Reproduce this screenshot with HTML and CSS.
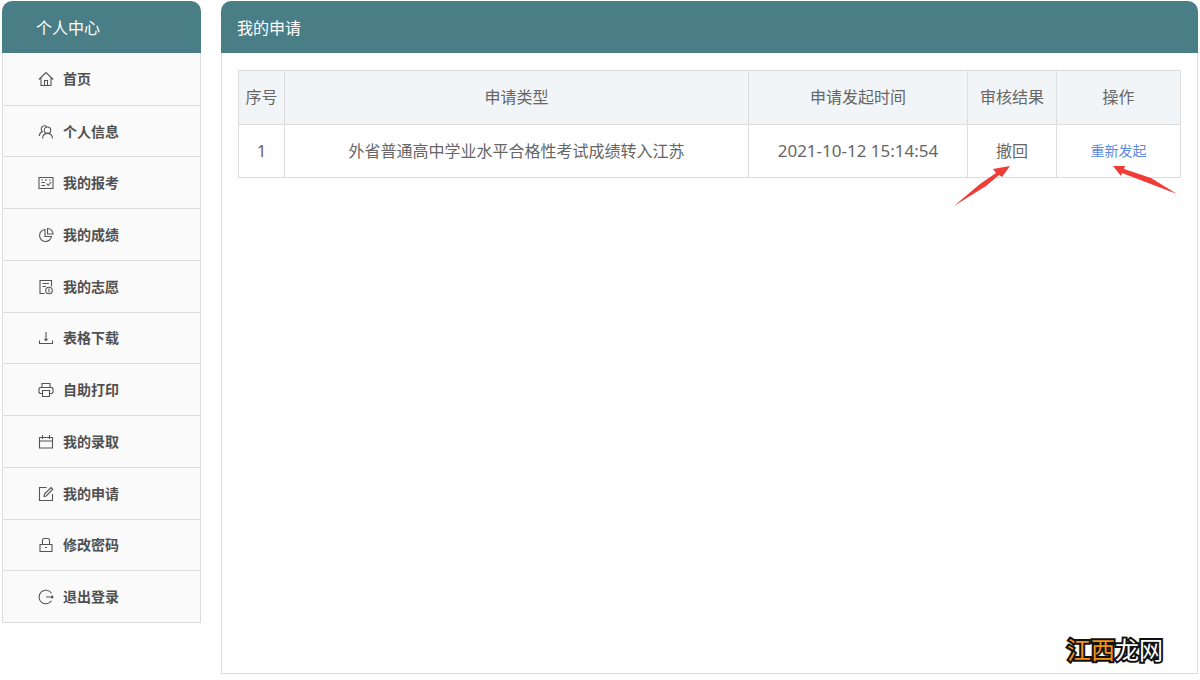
FILE: index.html
```html
<!DOCTYPE html>
<html lang="zh-CN">
<head>
<meta charset="utf-8">
<title>我的申请</title>
<link rel="stylesheet" href="styles.css">
</head>
<body>
<div class="layout">
  <nav class="sidebar" aria-label="个人中心">
    <h2 class="bar bar-side">个人中心</h2>
    <ul class="menu">
      <li><a href="#"><svg class="icon" viewBox="0 0 16 16"><path d="M.8 8.500 8 1.500l7.200 7M3 7v7.500h10V7M6.500 14.500V9.500h3v5"/></svg>首页</a></li>
      <li><a href="#"><svg class="icon" viewBox="0 0 16 16"><circle cx="9.500" cy="6.200" r="3.200"/><path d="M4.500 14.500c.2-3.200 2-5.100 5-5.100s4.800 1.900 5 5.100M4.500 7.700A3 3 0 1 1 8.600 2.500M1.200 12c.2-2.300 1.400-3.700 3.600-4.400"/></svg>个人信息</a></li>
      <li><a href="#"><svg class="icon" viewBox="0 0 16 16"><path d="M1 2.500h14v11H1zM3.500 5h1.500M7 5h2M11 5h1.500M3.500 7.500h3.500M3.500 10.500h3.500M8.500 8.500l1.700 2 3-3.500"/></svg>我的报考</a></li>
      <li><a href="#"><svg class="icon" viewBox="0 0 16 16"><path d="M7 2.500A6 6 0 1 0 13.500 9.500H7zM9.500 1.500v5.500h5.500A5.500 5.500 0 0 0 9.500 1.500z"/></svg>我的成绩</a></li>
      <li><a href="#"><svg class="icon" viewBox="0 0 16 16"><path d="M6.500 14.500H2v-13h11.500v6M4.500 4.500H11M4.500 7.500h3.500"/><circle cx="11" cy="11.500" r="3.300"/><path d="M11 9.500v4"/></svg>我的志愿</a></li>
      <li><a href="#"><svg class="icon" viewBox="0 0 16 16"><path d="M1.500 10.500v3h13v-3M8 2v8.500M6.500 9l1.500 1.500 1.500-1.500"/></svg>表格下载</a></li>
      <li><a href="#"><svg class="icon" viewBox="0 0 16 16"><path d="M4 5.500v-4h8v4M4 11.500H2l-1-1v-4l1-1h12l1 1v4l-1 1h-2M4.500 8.500h7v6h-7z"/></svg>自助打印</a></li>
      <li><a href="#"><svg class="icon" viewBox="0 0 16 16"><path d="M1.500 3.500h13v10.500h-13zM1.500 7h13M4.500 1v4M11.500 1v4"/></svg>我的录取</a></li>
      <li><a href="#"><svg class="icon" viewBox="0 0 16 16"><path d="M8.500 1.500H1.500v13h13V8M6 10.500l.5-2.500L13 1.500l1.700 1.700L8.200 10z"/></svg>我的申请</a></li>
      <li><a href="#"><svg class="icon" viewBox="0 0 16 16"><path d="M2 7.500h12v7H2zM4.500 7.500V3q0-1.500 1.500-1.500h4q1.500 0 1.500 1.500v4.500M7 10.500h2"/></svg>修改密码</a></li>
      <li><a href="#"><svg class="icon" viewBox="0 0 16 16"><path d="M13.500 4.200a6.800 6.800 0 1 0 0 7.600M8 8h7M13.500 6.500 15 8l-1.500 1.500"/></svg>退出登录</a></li>
    </ul>
  </nav>
  <main class="panel">
    <h1 class="bar bar-main">我的申请</h1>
    <div class="content">
      <table class="grid">
        <colgroup><col class="c-no"><col><col class="c-time"><col class="c-result"><col class="c-action"></colgroup>
        <thead>
          <tr><th>序号</th><th>申请类型</th><th>申请发起时间</th><th>审核结果</th><th>操作</th></tr>
        </thead>
        <tbody>
          <tr>
            <td class="num">1</td>
            <td>外省普通高中学业水平合格性考试成绩转入江苏</td>
            <td class="num">2021-10-12 15:14:54</td>
            <td class="marked">撤回<svg class="arrow arrow-result" viewBox="0 0 56 40"><path d="M0 40 26 18 42 7 39 3 56 0 48 11 45 9 32 20z"/></svg></td>
            <td class="marked"><a class="redo" href="#">重新发起</a><svg class="arrow arrow-action" viewBox="0 0 64 28"><path d="M0 0 12 0 11 3 38 12 64 28 30 15 9 7 8 10z"/></svg></td>
          </tr>
        </tbody>
      </table>
    </div>
    <div class="watermark"><span class="warm">江西</span>龙网</div>
  </main>
</div>
</body>
</html>
```
FILE: styles.css
```css
* { box-sizing: border-box; }
body {
  margin: 0;
  padding: 1px 2px 6px;
  background: #fff;
  color: #666;
  font: 16px/24px "Noto Sans", "Noto Sans CJK SC", sans-serif;
}
.layout { display: flex; align-items: flex-start; gap: 20px; }
.sidebar { flex: 0 0 199px; }
.bar {
  margin: 0;
  padding: 15px 16px 13px;
  border-radius: 10px 10px 0 0;
  background: #4a7e87;
  color: #fff;
  font-size: 16px;
  font-weight: 400;
  line-height: 24px;
}
.bar-side { padding-left: 34px; }
.menu {
  display: grid;
  grid-auto-rows: 1fr;
  min-height: 570px;
  margin: 0;
  padding: 0;
  list-style: none;
  background: #fafafa;
  border: 1px solid #ddd;
  border-top: 0;
}
.menu li { display: flex; }
.menu li + li { border-top: 1px solid #ddd; }
.menu a {
  flex: 1;
  display: flex;
  align-items: center;
  gap: 9px;
  padding: 1px 35px 0;
  color: #505050;
  font-size: 14px;
  font-weight: 700;
  text-decoration: none;
}
.icon {
  width: 16px;
  height: 16px;
  fill: none;
  stroke: #555;
  stroke-width: 1.1;
}
.panel {
  position: relative;
  flex: 1;
  min-width: 0;
  min-height: calc(100vh - 7px);
  display: flex;
  flex-direction: column;
}
.content {
  flex: 1;
  padding: 17px 16px;
  border: 1px solid #ddd;
  border-top: 0;
}
.grid {
  width: 100%;
  table-layout: fixed;
  border-collapse: collapse;
  text-align: center;
}
.grid th, .grid td {
  padding: 14px 0;
  border: 1px solid #dcdcdc;
  font-weight: 400;
  line-height: 25px;
}
.grid th { background: #f2f5f7; }
.grid td { padding-top: 13px; line-height: 24px; }
.grid .num { font-size: 17px; }
.c-no { width: 46px; }
.c-time { width: 219px; }
.c-result { width: 89px; }
.c-action { width: 124px; }
.redo { color: #5b8be0; font-size: 14px; text-decoration: none; }
.marked { position: relative; }
.arrow { position: absolute; top: 41px; fill: #f03c37; }
.arrow-result { right: calc(50% + 2px); width: 56px; height: 40px; }
.arrow-action { left: calc(50% - 6px); width: 64px; height: 28px; }
.watermark {
  position: absolute;
  right: 35px;
  bottom: 8px;
  color: #fff;
  font-size: 24px;
  font-weight: 400;
  line-height: 32px;
  -webkit-text-stroke: 4px #111;
  paint-order: stroke fill;
}
.warm { color: #f39019; }
```
